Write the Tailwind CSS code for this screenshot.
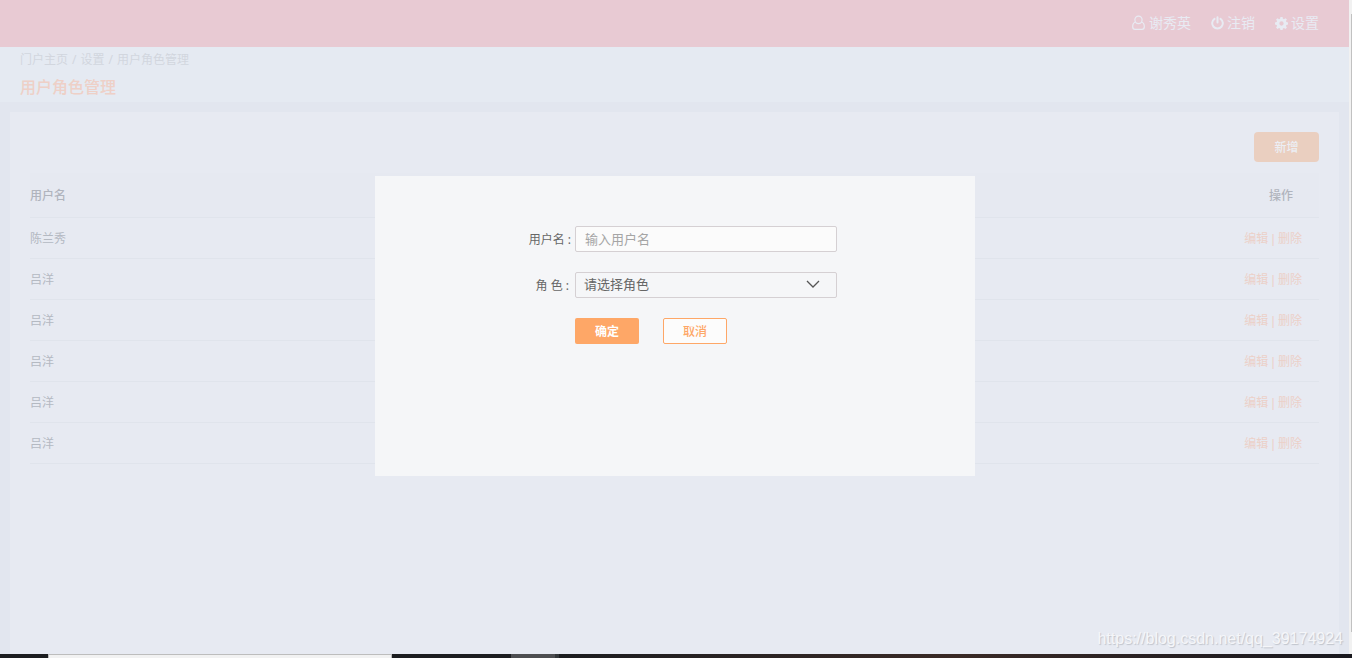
<!DOCTYPE html>
<html lang="zh-CN">
<head>
    <meta charset="UTF-8">
    <meta name="viewport" content="width=device-width, initial-scale=1.0">
    <title>用户角色管理</title>
    <script src="https://cdn.jsdelivr.net/npm/@tailwindcss/browser@4"></script>
</head>
<body class="h-screen flex flex-col overflow-hidden bg-[#e2e6ef] text-xs font-['Noto_Sans','Noto_Sans_CJK_SC',sans-serif]">

    <div class="relative flex flex-1 min-h-0">

        <!-- Page -->
        <div class="flex-1 flex flex-col">

            <!-- Top bar -->
            <header class="h-[47px] shrink-0 bg-[#e8cad3] text-[#e8ebf3] text-sm">
                <nav class="h-[46px] flex items-center justify-end gap-5 pr-[30px]">
                    <a href="#" class="flex items-center gap-1">
                        <svg class="w-[13px] h-4" viewBox="0 0 13 16" fill="none" stroke="currentColor" stroke-width="1.2">
                            <path d="M6.500 1.100a3.600 3.600 0 0 1 3.600 3.700c0 2.100-1.500 3.900-3.600 3.900S2.900 6.900 2.900 4.800a3.600 3.600 0 0 1 3.600-3.700z"/>
                            <path d="M3.500 7C1.500 7.500.7 9.300.7 11.700c0 1.500.9 2.700 2.300 2.700h7c1.400 0 2.300-1.200 2.300-2.700 0-2.400-.8-4.200-2.800-4.700"/>
                        </svg>
                        谢秀英
                    </a>
                    <a href="#" class="flex items-center gap-[3px]">
                        <svg class="w-[13px] h-[14px]" viewBox="0 0 13 14" fill="none" stroke="currentColor" stroke-width="2" stroke-linecap="round">
                            <path d="M3.500 2.900a5.300 5.300 0 1 0 6 0M6.500 1.200v5.300"/>
                        </svg>
                        注销
                    </a>
                    <a href="#" class="flex items-center gap-[3px]">
                        <svg class="w-[13px] h-[13px]" viewBox="0 0 12 12" fill="currentColor" fill-rule="evenodd">
                            <path d="M5 0h2l.3 1.600 1 .4L9.700 1.100l1.300 1.300-.9 1.300.4 1L12 5v2l-1.500.3-.4 1 .9 1.400-1.300 1.300-1.400-.9-1 .4L7 12H5l-.3-1.500-1-.4-1.400.9L1 9.700l.9-1.400-.4-1L0 7V5l1.500-.3.4-1L1 2.400l1.300-1.300 1.400.9 1-.4zM6 4a2 2 0 1 0 0 4 2 2 0 0 0 0-4z"/>
                        </svg>
                        设置
                    </a>
                </nav>
            </header>

            <!-- Breadcrumb and title -->
            <div class="h-[55px] shrink-0 px-5 pt-[5px] bg-[#e5eaf2]">
                <div class="flex gap-1 leading-4 text-[#d2d6de]">
                    <a href="#">门户主页</a>
                    <span>/</span>
                    <a href="#">设置</a>
                    <span>/</span>
                    <span>用户角色管理</span>
                </div>
                <h1 class="mt-[7px] text-base leading-6 font-medium text-[#eed0c7]">用户角色管理</h1>
            </div>

            <!-- Role table -->
            <main class="flex-1 mt-[10px] mx-[10px] px-5 pt-5 bg-[#e7eaf2]">
                <div class="flex justify-end">
                    <button type="button" class="w-[65px] h-[30px] pt-[2px] rounded bg-[#eacfc0] text-[#eceef4] font-medium">新增</button>
                </div>
                <table class="w-full mt-[11px] border-collapse">
                    <thead>
                        <tr class="h-11 bg-[#e6e9f1] border-b border-[#e0e4ec] text-[#b0b4bd]">
                            <th class="pt-[2px] text-left font-medium">用户名</th>
                            <th class="pt-[2px] text-right font-medium pr-[26px]">操作</th>
                        </tr>
                    </thead>
                    <tbody class="text-[#b4b9c2] font-['Liberation_Sans','Noto_Sans_CJK_SC',sans-serif]">
                        <tr class="h-[41px] border-b border-[#e0e4ec]">
                            <td class="pt-[2px]">陈兰秀</td>
                            <td class="pt-[2px] text-right pr-[17px] text-[#ecd0c8]"><a href="#">编辑</a> | <a href="#">删除</a></td>
                        </tr>
                        <tr class="h-[41px] border-b border-[#e0e4ec]">
                            <td class="pt-[2px]">吕洋</td>
                            <td class="pt-[2px] text-right pr-[17px] text-[#ecd0c8]"><a href="#">编辑</a> | <a href="#">删除</a></td>
                        </tr>
                        <tr class="h-[41px] border-b border-[#e0e4ec]">
                            <td class="pt-[2px]">吕洋</td>
                            <td class="pt-[2px] text-right pr-[17px] text-[#ecd0c8]"><a href="#">编辑</a> | <a href="#">删除</a></td>
                        </tr>
                        <tr class="h-[41px] border-b border-[#e0e4ec]">
                            <td class="pt-[2px]">吕洋</td>
                            <td class="pt-[2px] text-right pr-[17px] text-[#ecd0c8]"><a href="#">编辑</a> | <a href="#">删除</a></td>
                        </tr>
                        <tr class="h-[41px] border-b border-[#e0e4ec]">
                            <td class="pt-[2px]">吕洋</td>
                            <td class="pt-[2px] text-right pr-[17px] text-[#ecd0c8]"><a href="#">编辑</a> | <a href="#">删除</a></td>
                        </tr>
                        <tr class="h-[41px] border-b border-[#e0e4ec]">
                            <td class="pt-[2px]">吕洋</td>
                            <td class="pt-[2px] text-right pr-[17px] text-[#ecd0c8]"><a href="#">编辑</a> | <a href="#">删除</a></td>
                        </tr>
                    </tbody>
                </table>
            </main>
        </div>

        <!-- Scrollbar -->
        <div class="w-[3px] pt-[14px] pb-[22px] pl-[2px] bg-[#f1f1f1]">
            <div class="h-full bg-[#c1c1c1]"></div>
        </div>

        <!-- Dialog -->
        <div class="absolute inset-x-0 top-44 flex justify-center pr-[2px]">
            <form role="dialog" class="w-[600px] h-[300px] pt-[50px] bg-[#f5f6f8] text-[#666]">
                <div class="flex items-center">
                    <label for="username" class="w-[200px] pt-[2px] pr-1 text-right">用户名 :</label>
                    <input id="username" type="text" placeholder="输入用户名" class="w-[262px] h-[26px] px-[9px] border border-[#d5d0d3] rounded-xs bg-[#fbfbfb] text-[13px] placeholder:text-[#a5a5a5] outline-none">
                </div>
                <div class="flex items-center mt-5">
                    <label for="role" class="w-[200px] pt-[2px] pr-[6px] text-right">角 色 :</label>
                    <div class="relative">
                        <select id="role" class="block w-[262px] h-[26px] px-2 border border-[#d5d0d3] rounded-xs bg-transparent text-[13px] appearance-none outline-none">
                            <option>请选择角色</option>
                        </select>
                        <svg class="absolute right-[17px] top-2 w-[14px] h-2 pointer-events-none" viewBox="0 0 14 8" fill="none" stroke="#555" stroke-width="1.300">
                            <path d="M1 1l6 6 6-6"/>
                        </svg>
                    </div>
                </div>
                <div class="flex gap-6 mt-5 ml-[200px]">
                    <button type="submit" class="w-16 h-[26px] pt-[2px] rounded-xs bg-[#fea767] text-white font-bold">确定</button>
                    <button type="button" class="w-16 h-[26px] pt-[2px] rounded-xs border border-[#fea767] bg-[#fcfcfc] text-[#fea767] font-medium">取消</button>
                </div>
            </form>
        </div>

        <!-- Watermark -->
        <p class="absolute right-[9px] bottom-[3px] text-base leading-6 text-[#f5f6f9] text-shadow-[1px_1px_1px_#bfc3cb] font-['Liberation_Sans',sans-serif]">https://blog.csdn.net/qq_39174924</p>
    </div>

    <!-- Taskbar edge -->
    <div class="flex h-1 shrink-0 bg-[#1c1d20]">
        <div class="w-12"></div>
        <div class="w-[344px] bg-[#f2f2f2] border-t border-x border-[#bdbdbd]"></div>
        <div class="w-[119px]"></div>
        <div class="w-12 bg-[#4d4e51] border-r-4 border-[#34373a]"></div>
        <div class="flex-1 bg-linear-to-r from-[#1c1d20] via-[#3a2a26] to-[#18181e]"></div>
    </div>

</body>
</html>
